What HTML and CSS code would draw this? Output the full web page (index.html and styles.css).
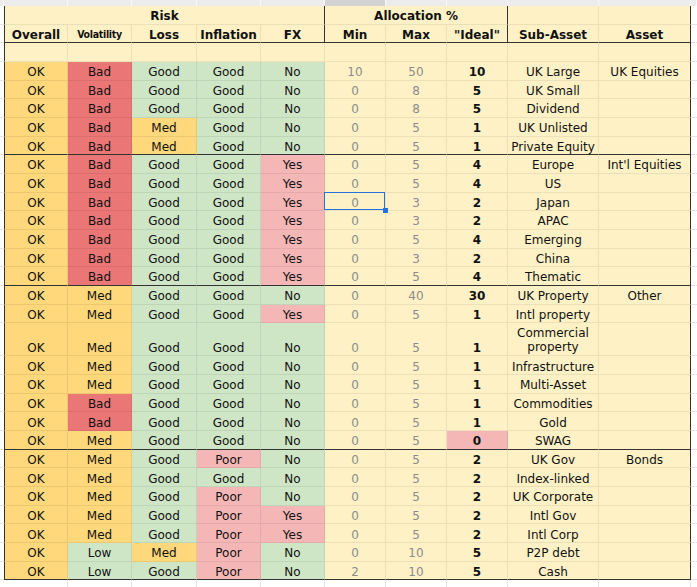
FILE: index.html
```html
<!DOCTYPE html>
<html lang="en">
<head>
<meta charset="utf-8">
<title>Asset allocation</title>
<link rel="stylesheet" href="styles.css">
</head>
<body>
<div class="sheet">
  <div class="strip"><span></span><span></span><span></span><span></span><span></span><span></span><span class="selcol"></span><span></span><span></span><span></span><span></span><span></span></div>

  <div class="row"><i class="out"></i><span class="c hd sep span5">Risk</span><span class="c hd sep span3">Allocation %</span><span class="c"></span><span class="c"></span><i class="out"></i></div>
  <div class="row end"><i class="out"></i><span class="c hd">Overall</span><span class="c hd vol">Volatility</span><span class="c hd">Loss</span><span class="c hd">Inflation</span><span class="c hd sep">FX</span><span class="c hd">Min</span><span class="c hd">Max</span><span class="c hd sep">"Ideal"</span><span class="c hd">Sub-Asset</span><span class="c hd">Asset</span><i class="out"></i></div>
  <div class="row"><i class="out"></i><span class="c"></span><span class="c"></span><span class="c"></span><span class="c"></span><span class="c"></span><span class="c"></span><span class="c"></span><span class="c"></span><span class="c"></span><span class="c"></span><i class="out"></i></div>

  <div class="row"><i class="out"></i><span class="c ok">OK</span><span class="c bad">Bad</span><span class="c good">Good</span><span class="c good">Good</span><span class="c good">No</span><span class="c num">10</span><span class="c num">50</span><span class="c ideal">10</span><span class="c">UK Large</span><span class="c">UK Equities</span><i class="out"></i></div>
  <div class="row"><i class="out"></i><span class="c ok">OK</span><span class="c bad">Bad</span><span class="c good">Good</span><span class="c good">Good</span><span class="c good">No</span><span class="c num">0</span><span class="c num">8</span><span class="c ideal">5</span><span class="c">UK Small</span><span class="c"></span><i class="out"></i></div>
  <div class="row"><i class="out"></i><span class="c ok">OK</span><span class="c bad">Bad</span><span class="c good">Good</span><span class="c good">Good</span><span class="c good">No</span><span class="c num">0</span><span class="c num">8</span><span class="c ideal">5</span><span class="c">Dividend</span><span class="c"></span><i class="out"></i></div>
  <div class="row"><i class="out"></i><span class="c ok">OK</span><span class="c bad">Bad</span><span class="c ok">Med</span><span class="c good">Good</span><span class="c good">No</span><span class="c num">0</span><span class="c num">5</span><span class="c ideal">1</span><span class="c">UK Unlisted</span><span class="c"></span><i class="out"></i></div>
  <div class="row end"><i class="out"></i><span class="c ok">OK</span><span class="c bad">Bad</span><span class="c ok">Med</span><span class="c good">Good</span><span class="c good">No</span><span class="c num">0</span><span class="c num">5</span><span class="c ideal">1</span><span class="c">Private Equity</span><span class="c"></span><i class="out"></i></div>

  <div class="row"><i class="out"></i><span class="c ok">OK</span><span class="c bad">Bad</span><span class="c good">Good</span><span class="c good">Good</span><span class="c pink">Yes</span><span class="c num">0</span><span class="c num">5</span><span class="c ideal">4</span><span class="c">Europe</span><span class="c">Int'l Equities</span><i class="out"></i></div>
  <div class="row"><i class="out"></i><span class="c ok">OK</span><span class="c bad">Bad</span><span class="c good">Good</span><span class="c good">Good</span><span class="c pink">Yes</span><span class="c num">0</span><span class="c num">5</span><span class="c ideal">4</span><span class="c">US</span><span class="c"></span><i class="out"></i></div>
  <div class="row"><i class="out"></i><span class="c ok">OK</span><span class="c bad">Bad</span><span class="c good">Good</span><span class="c good">Good</span><span class="c pink">Yes</span><span class="c num sel">0</span><span class="c num">3</span><span class="c ideal">2</span><span class="c">Japan</span><span class="c"></span><i class="out"></i></div>
  <div class="row"><i class="out"></i><span class="c ok">OK</span><span class="c bad">Bad</span><span class="c good">Good</span><span class="c good">Good</span><span class="c pink">Yes</span><span class="c num">0</span><span class="c num">3</span><span class="c ideal">2</span><span class="c">APAC</span><span class="c"></span><i class="out"></i></div>
  <div class="row"><i class="out"></i><span class="c ok">OK</span><span class="c bad">Bad</span><span class="c good">Good</span><span class="c good">Good</span><span class="c pink">Yes</span><span class="c num">0</span><span class="c num">5</span><span class="c ideal">4</span><span class="c">Emerging</span><span class="c"></span><i class="out"></i></div>
  <div class="row"><i class="out"></i><span class="c ok">OK</span><span class="c bad">Bad</span><span class="c good">Good</span><span class="c good">Good</span><span class="c pink">Yes</span><span class="c num">0</span><span class="c num">3</span><span class="c ideal">2</span><span class="c">China</span><span class="c"></span><i class="out"></i></div>
  <div class="row end"><i class="out"></i><span class="c ok">OK</span><span class="c bad">Bad</span><span class="c good">Good</span><span class="c good">Good</span><span class="c pink">Yes</span><span class="c num">0</span><span class="c num">5</span><span class="c ideal">4</span><span class="c">Thematic</span><span class="c"></span><i class="out"></i></div>

  <div class="row"><i class="out"></i><span class="c ok">OK</span><span class="c ok">Med</span><span class="c good">Good</span><span class="c good">Good</span><span class="c good">No</span><span class="c num">0</span><span class="c num">40</span><span class="c ideal">30</span><span class="c">UK Property</span><span class="c">Other</span><i class="out"></i></div>
  <div class="row"><i class="out"></i><span class="c ok">OK</span><span class="c ok">Med</span><span class="c good">Good</span><span class="c good">Good</span><span class="c pink">Yes</span><span class="c num">0</span><span class="c num">5</span><span class="c ideal">1</span><span class="c">Intl property</span><span class="c"></span><i class="out"></i></div>
  <div class="row tall"><i class="out"></i><span class="c ok">OK</span><span class="c ok">Med</span><span class="c good">Good</span><span class="c good">Good</span><span class="c good">No</span><span class="c num">0</span><span class="c num">5</span><span class="c ideal">1</span><span class="c wrap">Commercial property</span><span class="c"></span><i class="out"></i></div>
  <div class="row"><i class="out"></i><span class="c ok">OK</span><span class="c ok">Med</span><span class="c good">Good</span><span class="c good">Good</span><span class="c good">No</span><span class="c num">0</span><span class="c num">5</span><span class="c ideal">1</span><span class="c">Infrastructure</span><span class="c"></span><i class="out"></i></div>
  <div class="row"><i class="out"></i><span class="c ok">OK</span><span class="c ok">Med</span><span class="c good">Good</span><span class="c good">Good</span><span class="c good">No</span><span class="c num">0</span><span class="c num">5</span><span class="c ideal">1</span><span class="c">Multi-Asset</span><span class="c"></span><i class="out"></i></div>
  <div class="row"><i class="out"></i><span class="c ok">OK</span><span class="c bad">Bad</span><span class="c good">Good</span><span class="c good">Good</span><span class="c good">No</span><span class="c num">0</span><span class="c num">5</span><span class="c ideal">1</span><span class="c">Commodities</span><span class="c"></span><i class="out"></i></div>
  <div class="row"><i class="out"></i><span class="c ok">OK</span><span class="c bad">Bad</span><span class="c good">Good</span><span class="c good">Good</span><span class="c good">No</span><span class="c num">0</span><span class="c num">5</span><span class="c ideal">1</span><span class="c">Gold</span><span class="c"></span><i class="out"></i></div>
  <div class="row end"><i class="out"></i><span class="c ok">OK</span><span class="c ok">Med</span><span class="c good">Good</span><span class="c good">Good</span><span class="c good">No</span><span class="c num">0</span><span class="c num">5</span><span class="c ideal pink">0</span><span class="c">SWAG</span><span class="c"></span><i class="out"></i></div>

  <div class="row"><i class="out"></i><span class="c ok">OK</span><span class="c ok">Med</span><span class="c good">Good</span><span class="c pink">Poor</span><span class="c good">No</span><span class="c num">0</span><span class="c num">5</span><span class="c ideal">2</span><span class="c">UK Gov</span><span class="c">Bonds</span><i class="out"></i></div>
  <div class="row"><i class="out"></i><span class="c ok">OK</span><span class="c ok">Med</span><span class="c good">Good</span><span class="c good">Good</span><span class="c good">No</span><span class="c num">0</span><span class="c num">5</span><span class="c ideal">2</span><span class="c">Index-linked</span><span class="c"></span><i class="out"></i></div>
  <div class="row"><i class="out"></i><span class="c ok">OK</span><span class="c ok">Med</span><span class="c good">Good</span><span class="c pink">Poor</span><span class="c good">No</span><span class="c num">0</span><span class="c num">5</span><span class="c ideal">2</span><span class="c">UK Corporate</span><span class="c"></span><i class="out"></i></div>
  <div class="row"><i class="out"></i><span class="c ok">OK</span><span class="c ok">Med</span><span class="c good">Good</span><span class="c pink">Poor</span><span class="c pink">Yes</span><span class="c num">0</span><span class="c num">5</span><span class="c ideal">2</span><span class="c">Intl Gov</span><span class="c"></span><i class="out"></i></div>
  <div class="row"><i class="out"></i><span class="c ok">OK</span><span class="c ok">Med</span><span class="c good">Good</span><span class="c pink">Poor</span><span class="c pink">Yes</span><span class="c num">0</span><span class="c num">5</span><span class="c ideal">2</span><span class="c">Intl Corp</span><span class="c"></span><i class="out"></i></div>
  <div class="row"><i class="out"></i><span class="c ok">OK</span><span class="c good">Low</span><span class="c ok">Med</span><span class="c pink">Poor</span><span class="c good">No</span><span class="c num">0</span><span class="c num">10</span><span class="c ideal">5</span><span class="c">P2P debt</span><span class="c"></span><i class="out"></i></div>
  <div class="row end"><i class="out"></i><span class="c ok">OK</span><span class="c good">Low</span><span class="c good">Good</span><span class="c pink">Poor</span><span class="c good">No</span><span class="c num">2</span><span class="c num">10</span><span class="c ideal">5</span><span class="c">Cash</span><span class="c"></span><i class="out"></i></div>

  <div class="tail"><span></span><span></span><span></span><span></span><span></span><span></span><span></span><span></span><span></span><span></span><span></span><span></span></div>
</div>
</body>
</html>
```

FILE: styles.css
```css
* {
  box-sizing: border-box;
}

html,
body {
  margin: 0;
  padding: 0;
  background: #ffffff;
}

body {
  width: 697px;
  height: 587px;
  overflow: hidden;
  font-family: "DejaVu Sans", Verdana, sans-serif;
  font-size: 12px;
  color: #111111;
}

.sheet {
  display: flex;
  flex-direction: column;
  height: 587px;
}

.strip,
.row,
.tail {
  display: grid;
  grid-template-columns: 4px 64px 64px 65px 64px 64px 61px 61px 61px 91px 92px 1fr;
  flex: none;
}

/* spreadsheet column-header bar (cut off at top) */
.strip {
  height: 6px;
}

.strip > span {
  background: #ececec;
  border-right: 1px solid #f8f8f8;
}

.strip > .selcol {
  background: #d3d3d3;
}

/* table rows */
.row {
  height: 18.667px;
  background: #fff1c6;
}

.row.tall {
  height: 33.333px;
}

.out {
  background: #ffffff;
  border-bottom: 1px solid #e3e3e3;
}

.c {
  display: flex;
  align-items: flex-end;
  justify-content: center;
  min-width: 0;
  padding-bottom: 0.5px;
  line-height: 14px;
  white-space: nowrap;
  border-right: 1px solid rgba(0, 0, 0, 0.07);
  border-bottom: 1px solid rgba(0, 0, 0, 0.07);
}

.row > .c:nth-child(2) {
  border-left: 1px solid #333333;
}

.row > .c:nth-last-child(2) {
  border-right-color: #333333;
}

.end > .c {
  border-bottom-color: #333333;
}

.sep {
  border-right-color: #333333;
}

.span5 {
  grid-column: span 5;
}

.span3 {
  grid-column: span 3;
}

.hd {
  font-weight: bold;
}

.vol {
  font-family: "DejaVu Sans Condensed", "DejaVu Sans", sans-serif;
  font-size: 10.5px;
  letter-spacing: -0.3px;
  padding-bottom: 1.5px;
}

.wrap {
  white-space: normal;
  text-align: center;
  line-height: 14.5px;
}

/* cell states */
.ok {
  background: #fed87a;
}

.bad {
  background: #eb7676;
}

.good {
  background: #cfe6c6;
}

.pink {
  background: #f5b7b6;
}

.num {
  color: #8c8c8c;
}

.ideal {
  font-weight: bold;
  color: #111111;
}

/* selected cell */
.sel {
  position: relative;
  z-index: 2;
}

.sel::after {
  content: "";
  position: absolute;
  left: -1px;
  top: -1px;
  right: 0;
  bottom: 0;
  border: 1.5px solid #2272df;
}

.sel::before {
  content: "";
  position: absolute;
  right: -3px;
  bottom: -3px;
  width: 5px;
  height: 5px;
  background: #2272df;
  z-index: 1;
}

/* empty sheet area below the table */
.tail {
  flex: 1;
}

.tail > span {
  border-right: 1px solid #e3e3e3;
}

.tail > span:first-child,
.tail > span:last-child {
  border-right: none;
}
```
